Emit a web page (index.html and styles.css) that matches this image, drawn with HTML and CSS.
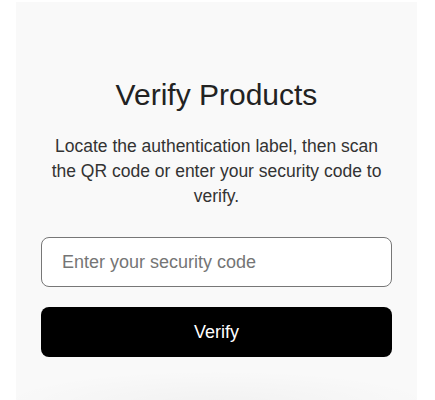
FILE: index.html
```html
<!DOCTYPE html>
<html>
<head>
<meta charset="utf-8">
<link rel="stylesheet" href="styles.css">
</head>
<body>
<div class="panel">
  <h1 class="title">Verify Products</h1>
  <p class="desc">Locate the authentication label, then scan the QR code or enter your security code to verify.</p>
  <input class="code" type="text" placeholder="Enter your security code">
  <button class="verify">Verify</button>
  <div class="shade"></div>
</div>
</body>
</html>
```
FILE: styles.css
```css
html, body {
  margin: 0;
  padding: 0;
  background: #ffffff;
  height: 400px;
  overflow: hidden;
}
body {
  font-family: "Liberation Sans", Arial, sans-serif;
}
.panel {
  margin: 2px 0 0 16px;
  width: 401px;
  height: 398px;
  box-sizing: border-box;
  padding: 75px 25px 0;
  background: #f9f9f9;
  display: flex;
  flex-direction: column;
  align-items: stretch;
  position: relative;
}
.title {
  margin: 0;
  font-size: 30px;
  font-weight: 400;
  line-height: 36px;
  color: #222;
  text-align: center;
}
.desc {
  margin: 21px 8px 0;
  font-size: 17.5px;
  line-height: 25px;
  color: #333;
  text-align: center;
}
.code {
  margin-top: 28px;
  height: 50px;
  box-sizing: border-box;
  border: 1px solid #777;
  border-radius: 8px;
  background: #fff;
  padding: 0 20px;
  font-family: inherit;
  font-size: 18px;
  color: #333;
  outline: none;
}
.code::placeholder {
  color: #757575;
}
.verify {
  margin-top: 20px;
  height: 50px;
  border: 0;
  border-radius: 8px;
  background: #000;
  color: #fff;
  font-family: inherit;
  font-size: 18px;
}
.shade {
  position: absolute;
  left: 0;
  right: 0;
  bottom: 0;
  height: 35px;
  background: radial-gradient(ellipse 55% 100% at 50% 115%, rgba(0,0,0,0.03), rgba(0,0,0,0));
  pointer-events: none;
}
```
